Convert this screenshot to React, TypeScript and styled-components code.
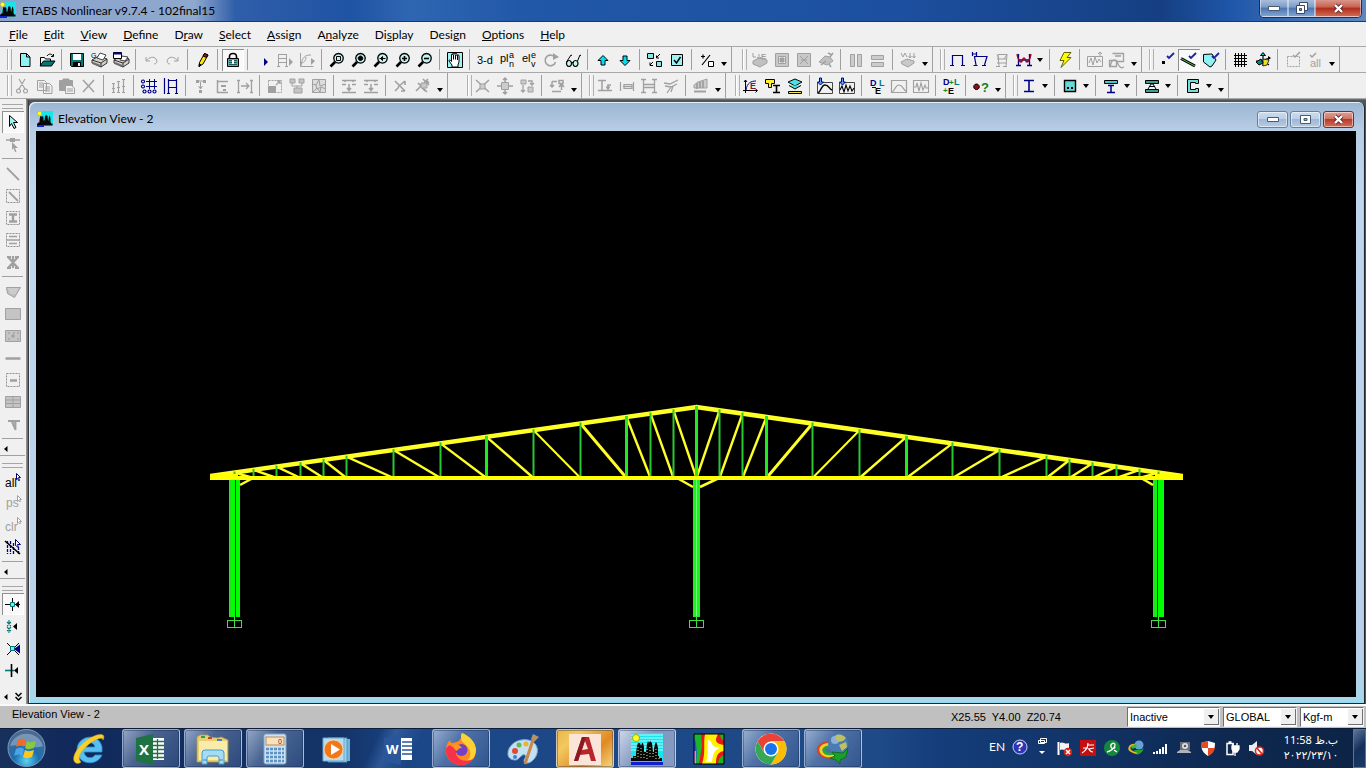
import React from "react";
import styled, { createGlobalStyle, css } from "styled-components";

const UI = `Lato, "Noto Sans", sans-serif`;
const GREY = "#a0a0a0";
const NAVY = "#000084";
const CYAN = "#7fe8e8";
const TEAL = "#007878";
const INK = "#000000";

const GlobalStyle = createGlobalStyle`
  * { box-sizing: border-box; }
  body { margin: 0; background: #f0f0f0; font-family: ${UI}; font-size: 12px; color: #000; }
  button { font: inherit; color: inherit; padding: 0; border: 0; background: none; }
  svg { display: block; }
`;

/* ---------- layout ---------- */

const Shell = styled.div`
  display: flex;
  flex-direction: column;
  height: 100vh;
  overflow: hidden;
`;

const TitleBar = styled.header`
  display: flex;
  align-items: flex-start;
  flex: none;
  height: 22px;
  border-bottom: 1px solid #17396f;
  background:
    linear-gradient(to right, rgba(160, 180, 212, 0.75), rgba(165, 185, 215, 0.8) 195px, rgba(120, 150, 195, 0) 235px),
    linear-gradient(to right, #4d76b4 0, #2c5ca8 260px, #1f53a4 350px, #2f66b2 410px, #2258a8 520px, #1c4f9f 900px, #153f82 1160px, #1f56a8 1230px, #5b88c4 100%);
`;

const TitleText = styled.h1`
  flex: 1;
  margin: 0;
  padding: 0 6px;
  font-size: 12px;
  font-weight: 400;
  line-height: 21px;
`;

const TitleLogo = styled.div`
  padding-top: 2px;
`;

const Caption = styled.div`
  display: flex;
  margin-right: 4px;
  border: 1px solid #1c2f50;
  border-top: 0;
  border-radius: 0 0 5px 5px;
  overflow: hidden;
`;

const CaptionButton = styled.button<{ $w: number; $close?: boolean }>`
  display: flex;
  align-items: center;
  justify-content: center;
  width: ${(p) => p.$w}px;
  height: 17px;
  border: 1px solid rgba(255, 255, 255, 0.45);
  border-top: 0;
  background: ${(p) =>
    p.$close
      ? "linear-gradient(#d9968c, #c8604f 45%, #b02a1a 50%, #cf6a50)"
      : "linear-gradient(#a9bedb, #7d9cc8 45%, #4c74ae 50%, #7ea4d2)"};
`;

const MenuBar = styled.nav`
  display: flex;
  align-items: center;
  flex: none;
  gap: 16px;
  height: 25px;
  padding: 2px 0 0 9px;
  background: #f0f0f0;
  border-bottom: 1px solid #a8a8a8;
`;

const MenuButton = styled.button`
  line-height: 18px;
  & > u { text-underline-offset: 1px; }
`;

const ToolRow = styled.div`
  display: flex;
  flex: none;
  height: 26px;
  background: #f0f0f0;
  border-bottom: 1px solid #a8a8a8;
`;

const Band = styled.div<{ $gap?: number }>`
  display: flex;
  align-items: center;
  flex: none;
  margin-right: ${(p) => p.$gap ?? 0}px;
  border-right: 1px solid #a0a0a0;
`;

const Grip = styled.i<{ $lead: number }>`
  flex: none;
  width: 5px;
  height: 21px;
  margin: 0 ${(p) => p.$lead - 12}px 0 7px;
  border: solid #b0b0b0;
  border-width: 0 1px;
  background: linear-gradient(to right, #fff 1px, #f0f0f0 1px);
`;

const ToolButton = styled.button<{ $on?: boolean }>`
  display: flex;
  align-items: center;
  justify-content: center;
  flex: none;
  width: 22px;
  height: 22px;
  ${(p) =>
    p.$on &&
    css`
      background: #f9f9f9;
      box-shadow: inset 1px 1px #8f8f8f, inset -1px -1px #fff;
    `}
`;

const Rule = styled.i<{ $across?: boolean }>`
  flex: none;
  ${(p) =>
    p.$across
      ? css`width: 21px; height: 1px; margin: 3px 0 4px;`
      : css`width: 1px; height: 21px; margin: 0 4px 0 3px;`}
  background: #a0a0a0;
`;

const DropButton = styled.button<{ $more?: boolean }>`
  display: flex;
  align-items: ${(p) => (p.$more ? "flex-end" : "center")};
  justify-content: center;
  flex: none;
  width: ${(p) => (p.$more ? 13 : 11)}px;
  height: 20px;
  padding-bottom: ${(p) => (p.$more ? 4 : 0)}px;
`;

const Work = styled.div`
  display: flex;
  flex: 1;
  min-height: 0;
  border-bottom: 2px solid #fafafa;
`;

const SideBar = styled.aside`
  display: flex;
  flex-direction: column;
  flex: none;
  width: 26px;
  padding-top: 1px;
  background: #f0f0f0;
`;

const SideBand = styled.div<{ $first?: boolean }>`
  display: flex;
  flex-direction: column;
  align-items: center;
  padding: ${(p) => (p.$first ? 4 : 7)}px 1px 0 0;
`;

const SideGrip = styled.i`
  width: 21px;
  height: 5px;
  margin-bottom: 2px;
  border: solid #a6a6a6;
  border-width: 1px 0;
`;

const SideMore = styled.button<{ $last?: boolean }>`
  display: flex;
  align-items: center;
  gap: 7px;
  width: 100%;
  height: 13px;
  margin-top: ${(p) => (p.$last ? 9 : 0)}px;
  padding-left: 4px;
  border-bottom: ${(p) => (p.$last ? 0 : 1)}px solid #a0a0a0;
`;

const Mdi = styled.main`
  display: flex;
  flex: 1;
  min-width: 0;
  padding: 2px 1px 0 3px;
  background: linear-gradient(to right, #8f8f8f 1px, #4e4e4e 2px, #202428 3px, #50565c 3px);
  border-top: 1px solid #6e6e6e;
`;

const ChildWindow = styled.section`
  display: flex;
  flex-direction: column;
  flex: 1;
  min-width: 0;
  padding: 0 8px 6px 7px;
  border: solid #20262c;
  border-width: 0 1px 1px 0;
  border-radius: 6px 6px 0 0;
  background: linear-gradient(#9bb5d1, #b8cde6 28px, #c0d6ef 90px, #b9d0ea 92%, #a5d8ea);
  box-shadow: inset 1px 1px #e4eef8, inset -1px -1px #8fdcf0;
`;

const ChildTitle = styled.header`
  display: flex;
  align-items: center;
  flex: none;
  height: 29px;
  padding: 5px 2px 0 1px;
`;

const ChildName = styled.h2`
  flex: 1;
  margin: 0;
  padding-left: 5px;
  font-size: 12px;
  font-weight: 400;
  line-height: 20px;
`;

const ChildButtons = styled.div`
  display: flex;
  gap: 2px;
`;

const ChildButton = styled.button<{ $close?: boolean }>`
  display: flex;
  align-items: center;
  justify-content: center;
  width: 31px;
  height: 17px;
  border: 1px solid ${(p) => (p.$close ? "#7c2a22" : "#66809f")};
  border-radius: 3px;
  box-shadow: inset 0 0 0 1px rgba(255, 255, 255, 0.5);
  background: ${(p) =>
    p.$close
      ? "linear-gradient(#e0a097, #d27464 45%, #bc3a28 50%, #d0715b)"
      : "linear-gradient(#cddcee, #bccfe6 45%, #9fb8d5 50%, #b6cce6)"};
`;

const Canvas = styled.div`
  flex: 1;
  min-height: 0;
  background: #000;
  & > svg { width: 100%; height: 100%; }
`;

const StatusBar = styled.footer`
  display: flex;
  align-items: center;
  flex: none;
  height: 22px;
  padding: 0 2px 0 12px;
  background: #c0c0c0;
  font-family: "Liberation Sans", Arial, sans-serif;
  font-size: 11px;
`;

const StatusText = styled.span<{ $grow?: boolean }>`
  flex: ${(p) => (p.$grow ? "1" : "none")};
  width: ${(p) => (p.$grow ? "auto" : "176px")};
  padding-bottom: ${(p) => (p.$grow ? 6 : 0)}px;
  line-height: 16px;
`;

const PickBox = styled.label<{ $w: number }>`
  position: relative;
  width: ${(p) => p.$w}px;
  margin-right: 3px;
  border: 1px solid #707070;
  border-color: #707070 #f4f4f4 #f4f4f4 #707070;
  background: #fff;
  &:last-child { margin-right: 0; }
`;

const Pick = styled.select`
  appearance: none;
  display: block;
  width: 100%;
  height: 18px;
  padding: 0 16px 0 2px;
  border: 0;
  background: #fff;
  color: #000;
  font: 11px "Liberation Sans", Arial, sans-serif;
`;

const PickArrow = styled.i`
  position: absolute;
  top: 1px;
  right: 0;
  bottom: 1px;
  display: flex;
  align-items: center;
  justify-content: center;
  width: 15px;
  background: #f0f0f0;
  border: solid #707070;
  border-width: 0 1px 1px 0;
  pointer-events: none;
`;

const TaskBar = styled.div`
  display: flex;
  align-items: stretch;
  flex: none;
  height: 40px;
  border-top: 1px solid #0b1d3a;
  background:
    linear-gradient(115deg, transparent 345px, rgba(70, 120, 190, 0.45) 360px, transparent 385px),
    linear-gradient(to right, #17305c 0, #10295a 70px, #143468 340px, #1b4788 420px, #1e4a87 880px, #143d7a 940px, #12356a 1060px, #0e2850 1230px, #0c2344 100%);
  color: #fff;
`;

const Start = styled.button`
  flex: none;
  width: 60px;
  padding: 0 0 0 7px;
`;

const Apps = styled.div`
  display: flex;
  gap: 4px;
`;

const AppButton = styled.button<{ $open?: boolean; $tone?: string }>`
  display: flex;
  align-items: center;
  justify-content: center;
  width: 58px;
  height: 39px;
  border-radius: 3px;
  border: 1px solid ${(p) => (p.$open ? "rgba(200,215,240,0.65)" : "transparent")};
  ${(p) =>
    p.$open &&
    css`
      background: ${p.$tone ??
      "linear-gradient(125deg, rgba(205,218,240,0.7), rgba(130,155,195,0.5) 40%, rgba(70,100,150,0.5))"};
      box-shadow: inset 0 0 0 1px rgba(20, 35, 70, 0.35);
    `}
`;

const Tray = styled.div`
  display: flex;
  align-items: center;
  margin-left: auto;
  padding-bottom: 2px;
`;

const Lang = styled.button`
  width: 24px;
  padding-bottom: 2px;
`;

const TrayButton = styled.button<{ $w?: number }>`
  display: flex;
  align-items: center;
  justify-content: center;
  width: ${(p) => p.$w ?? 24}px;
  height: 34px;
`;

const Clock = styled.time`
  display: flex;
  flex-direction: column;
  align-items: center;
  width: 84px;
  font-size: 11px;
  line-height: 16px;
  font-family: "Noto Sans", "DejaVu Sans", sans-serif;
`;

const ClockDate = styled.span`
  direction: ltr;
  unicode-bidi: bidi-override;
  font-family: "DejaVu Sans", sans-serif;
`;

const Desktop = styled.button`
  width: 13px;
  border: 1px solid #5b7396;
  background: linear-gradient(135deg, #5d7597, #14305a 50%, #1c3a66);
`;

/* ---------- small toolbar drawings ---------- */

// [path, stroke, fill, stroke width, dash]
type Stroke = [string, string?, string?, number?, string?];
type Label = { t: string; x: number; y: number; c: string; s?: number; b?: boolean };
type Part = Stroke | Label;

const lens = (inner: Part[]): Part[] => [
  ["M6 10L1.500 14.500", INK, undefined, 2.600],
  ["M9.500 1.500a4.800 4.800 0 1 0 .01 0z", INK, "#bff4f4", 1.300],
  ...inner,
];
const arrowTip = (d: string): Part[] => [[d, NAVY, "#4fa8f4", 1]];
const dashed: Part = ["M1.500 1.500h13v13h-13z", "#909090", undefined, 1, "2 1"];

const DRAWINGS: Record<string, Part[]> = {
  new: [["M3.500 1.500h6l3.500 3.500v9.500h-9.500z", INK, "#8ff2f2"], ["M9.500 1.500v3.500h3.500", INK]],
  open: [["M1.500 13.500v-8h4l1 1.500h5v2", INK, "#e8ffff"], ["M1 14l3.500-5h11.500l-3.500 5z", INK, TEAL], ["M8 4c2-3 5-2 6 0m.5-2v2.500h-2.500", INK]],
  save: [["M1.500 1.500h13v13h-12l-1-1z", INK, TEAL], ["M4 2h8v6H4z", undefined, "#fff"], ["M4 10h8v4.500H4z", undefined, INK], ["M9 11h2v3H9z", undefined, "#eee"]],
  printG: [["M1 8l7-4 8 3v4l-6 4-9-4z", "#333", "#d4d0c8"], ["M6 6l3-5 6 2-3 5z", "#444", "#fff"], ["M1 8l9 3 6-4M10 11v4", "#333"], ["M2 11l7 3", "#707070", undefined, 2], { t: "G", x: 0, y: 6, c: INK, s: 7 }],
  printW: [["M1 8l7-4 8 3v4l-6 4-9-4z", "#333", "#d4d0c8"], ["M9 4l6 1-3 4-5-1z", "#444", "#fff"], ["M1 8l9 3 6-4M10 11v4", "#333"], ["M2 11l7 3", "#707070", undefined, 2], ["M.5.500h8v6h-8z", INK, "#fff"], ["M0 1.500h9", NAVY, undefined, 2]],
  undo: [["M3 5v4h4M3 9c3-4 8-5 10-2s0 5-2 5", GREY]],
  redo: [["M13 5v4h-4M13 9c-3-4-8-5-10-2s0 5 2 5", GREY]],
  pencil: [["M4.500 10.500l5-9 3.500 1.500-5 9-4 2.500z", INK, "#ffe800"], ["M9.500 1.500l3.500 1.500-1.500 2.500-3.500-1.500z", INK, "#a01010"], ["M4.500 11.500l-.5 3 2-1.500z", INK, INK]],
  lock: [["M4.500 7V4.500q0-3 3.500-3t3.500 3V7", INK, undefined, 1.600], ["M2.500 6.500h11v8h-11z", INK, "#5cb0b0"], ["M4 8.500h8M4 10.500h8M4 12.500h8", "#1d5c5c"], ["M7 8h2v4H7z", undefined, "#fff"]],
  run: [["M9 6l4 4-4 4z", undefined, NAVY]],
  runFrame: [["M1.500 2v13M9.500 2v13M1.500 2.500h8M1.500 6.500h8M1.500 10.500h8M0 14.500h3M8 14.500h3", GREY], ["M12 6l4 4-4 4z", undefined, GREY]],
  runCurve: [["M1.500 1v13.500h13M2 14c1-9 4-11 10-11M2 11c4 0 5-4 5-6", GREY], ["M12 6l4 3-4 4z", undefined, GREY]],
  zoomWin: lens([["M7.500 4.500h4v4h-4z", INK]]),
  zoomFull: lens([["M9.500 4a2.300 2.300 0 1 0 .01 0z", INK, INK]]),
  zoomPrev: lens([["M6.500 6.500h6M9.500 4.500l-2 2 2 2z", INK, INK]]),
  zoomIn: lens([["M7 6.500h5M9.500 4v5", INK, undefined, 1.600]]),
  zoomOut: lens([["M7 6.500h5", INK, undefined, 1.600]]),
  pan: [["M.5.500h15v15h-15z", INK, "#9ff2f2"], ["M5 15v-2L2 9c0-1.500 1-1.500 2.500.500V3c0-1.500 1.500-1.500 1.500 0V2c0-1.500 2-1.500 2 0v.5c0-1.500 2-1.500 2 0V4c0-1.500 2-1.500 2 0v6l-1 3v2z", INK, "#fff"], ["M6.500 3v4.500M8.500 3v4.500M10.500 4v4", INK]],
  threeD: [{ t: "3-d", x: 0, y: 12, c: INK, s: 11 }],
  plan: [{ t: "pl", x: 1, y: 10, c: INK, s: 11 }, { t: "a", x: 10, y: 6, c: INK, s: 9 }, { t: "n", x: 10, y: 15, c: INK, s: 9 }],
  elev: [{ t: "el", x: 1, y: 10, c: INK, s: 11 }, { t: "e", x: 10, y: 6, c: INK, s: 9 }, { t: "v", x: 10, y: 15, c: INK, s: 9 }],
  rotate: [["M11 4.500A5.300 5.300 0 1 0 12.500 10", GREY, undefined, 1.600], ["M10 1l6 4-6 3z", undefined, GREY]],
  glasses: [["M4 8.500a2.500 3 0 1 0 .01 0zM10.500 8.500a2.500 3 0 1 0 .01 0z", INK, "#c8f6f6", 1.200], ["M1.500 10L6 3l1 .5M12.500 9L15 3l1 .5M6.500 10.500h2", INK]],
  up: [["M8 3.500l5 5H10v4.500H6V8.500H3z", INK, "#00e0f0"]],
  down: [["M8 13.500l5-5H10V4H6v4.500H3z", INK, "#00e0f0"]],
  shrink: [["M.5 1.500h6v5h-6zM9.500 9.500h5v5h-5z", INK, CYAN], ["M9 6l4-4M9.500 3.500V6H12M6 10l-3 3M3 10.500v3h3", INK]],
  check: [["M2.500 2.500h11v11h-11z", INK, "#9ff2f2"], ["M5 8l2.500 3 4-6", INK, undefined, 1.500]],
  percent: [["M3 13L11 3M2 4.500h4M4 2.500v4", INK, undefined, 1.200], ["M9.500 9.500h5v5h-5z", INK, "#fff"]],
  load1: [["M1 9l6-3 8 2v3l-7 4-7-3z", GREY, "#c0c0c0"], ["M1 1v4h3M7 2v5M5 5l2 2 2-2", GREY], { t: "E", x: 9, y: 7, c: GREY, s: 8, b: true }],
  load2: [["M1.500 1.500h13v13h-13z", GREY, "#c8c8c8"], ["M4.500 4.500h7v7h-7z", GREY, "#f0f0f0"], ["M6 6h4v4H6z", GREY, GREY]],
  load3: [["M1.500 1.500h13v13h-13z", GREY, "#c8c8c8"], ["M4 12L12 4M4 4l8 8M5 8h6", GREY]],
  load4: [["M1 10l6-6 5 1 3 4-6 4z", GREY, "#c0c0c0"], ["M10 1l4 2M12 5l3-4M3 13l5-4M11 12l2 3", GREY, undefined, 1.500]],
  cols: [["M2.500 2.500h4v12h-4zM9.500 2.500h4v12h-4z", GREY, "#ccc"]],
  rows: [["M1.500 3.500h12v4h-12zM1.500 10.500h12v4h-12z", GREY, "#ccc"]],
  loads: [["M1 10l6-3 7 2v2l-6 4-6-3z", GREY, "#c8c8c8"], ["M1 1l2 4 2-4 2 4M10 1v5M14 1v5M8.500 4l1.500 2 1.500-2M12.500 4l1.500 2 1.500-2", GREY]],
  frame: [["M2.500 13V3.500h10V13M0 13.500h4M11 13.500h4", NAVY, undefined, 1.200]],
  frameDef: [["M4 13L2.500 4.500H15L12.500 13M1.500 13.500h4M10 13.500h4M.5 0v4M4.500 0v4M.5 2h4", NAVY, undefined, 1.200]],
  framePlain: [["M5 14L4 2.500h9L12 14M3 7h10M3 2.500l2 4.500M13 2.500L10 7M2 14.500h4M9 14.500h4M3 11h10", GREY]],
  moment: [["M2.500 2v11M13.500 2v11M2.500 8h11M0 13.500h5M11 13.500h5", NAVY, undefined, 1.300], ["M1 2c1 5 2 8 4 8s1-4 3-4 1 4 3 4 3-3 4-8", "#a00028", undefined, 1.400]],
  bolt: [["M7 .5h7l-4 5h4l-10 10 3-7H3z", "#606000", "#ffff00"]],
  hist: [["M.5 4.500h15v10H.5zM2 11l2-5 2 7 2-8 2 6 2-4 2 3M13 4V0M11 2l2-2 2 2", GREY]],
  histRun: [["M3.500 1.500h11v8H8M1 15c2-9 5-9 8-3s5 3 6 3M.5 8.500h7v6h-7zM6 4h6", GREY, undefined, 1.300]],
  optDot: [["M3 9h3v3H3z", undefined, INK], ["M8 4l2 2 5-5", "#2020a0", undefined, 1.800]],
  optLine: [["M0 6.500L14 14", INK, undefined, 3], ["M0 6.500L14 14", "#50c050", undefined, 1], ["M8 4l2 2 5-5", "#2020a0", undefined, 1.800]],
  optArea: [["M.5 2.500L9 2l4 6-4 6-2 1-6.500-5z", INK, "#8ff2f2"], ["M9 4l2 2 5-5", "#2020a0", undefined, 1.800]],
  grid: [["M2.500 1v14M5.500 1v14M8.500 1v14M11.500 1v14M1 3.500h13M1 6.500h13M1 9.500h13M1 12.500h13", INK]],
  axes: [["M8 1v13M8 8l7-2M8 9L1 9M8 9l6 4", INK, undefined, 1.200], ["M5.500 3.500L8 .5l2.500 3z", INK, "#00d0d0"], ["M8 7l6 1-2 5-4 1z", "#333", "#e8e020"], ["M1 10l5-3 2 4-4 2z", INK, "#108080"], ["M13 4l3 2-3 2z", undefined, INK]],
  dashBox: [["M2.500 4.500h12v10h-12z", GREY, undefined, 1, "2 1"], ["M8 3l2 2 5-5", GREY, undefined, 1.500]],
  allCheck: [["M3 3l2 2 4-4", GREY, undefined, 1.500], { t: "all", x: 3, y: 15, c: GREY, s: 11 }],
  cut: [["M4 1l6 10M10 1L4 11M3.500 11a2 2 0 1 0 .01 0zM10.500 11a2 2 0 1 0 .01 0z", GREY, undefined, 1.200]],
  copy: [["M.5 2.500h7l2 2v8h-9zM6.500 5.500h6l2.500 2.500v7.500H6.500z", GREY, "#f0f0f0"], ["M2 5h4M2 7h4M2 9h4M8 9h5M8 11h5M8 13h5", GREY]],
  paste: [["M.5 2.500h13v10H.5zM4 1h6v3H4z", GREY, GREY], ["M6.500 7.500h6l3 2.500v5.500h-9z", GREY, "#f0f0f0"], ["M8 11h6M8 13h6", GREY]],
  del: [["M2 2l11 12M13 2L2 14", GREY, undefined, 1.500]],
  stories: [["M2.500 14V6M7.500 14V4M12.500 14V2M1 5.500h3M6 3.500h3M11 1.500h3M1 10.500h3M6 9.500h3M11 8.500h3M1 14.500h3M6 14.500h3M11 14.500h3", GREY, undefined, 1.200]],
  points: [["M5 3.500h11M5 8.500h11M8.500 1v10M13.500 1v10", NAVY], ["M2 2a1.500 1.500 0 1 0 .01 0zM2 7a1.500 1.500 0 1 0 .01 0zM3.500 12a1.500 1.500 0 1 0 .01 0zM8.500 12a1.500 1.500 0 1 0 .01 0zM13.500 12a1.500 1.500 0 1 0 .01 0z", NAVY, "#fff", 1.200]],
  frameH: [["M1.500 0v16M5.500 1v15M13.500 1v15M5.500 2.500h8M5.500 9.500h8M4 15.500h3M12 15.500h3", NAVY, undefined, 1.200]],
  alignT: [["M3 2h3v3H3zM10 2h3v3h-3zM6 12h3v3H6z", undefined, GREY], ["M7.500 4v7M5.500 8l2 3 2-3M6 3h4", GREY]],
  alignL: [["M2.500 2v12.500H13M3 3.500h10", GREY, undefined, 1.500], ["M6 7h5v2H6zM8 11h3v2H8z", undefined, GREY]],
  spread: [["M1.500 2v12M14.500 2v12M4 8h7M9 5l3 3-3 3M0 2.500h3M13 2.500h3M0 14.500h3M13 14.500h3", GREY, undefined, 1.300]],
  scale: [["M1.500 2.500h13v12h-13z", GREY, undefined, 1, "2 1"], ["M1 8h8v7H1z", undefined, GREY], ["M9 7l4-4M10 3h3v3", GREY, undefined, 1.300]],
  group: [["M1 1h5v4H1zM10 1h5v4h-5zM5 10h8v5H5z", GREY, "#c4c4c4"], ["M3 5v3h10V5M8 8v2", GREY]],
  mesh: [["M1.500 1.500h13v13h-13z", GREY, "#dcdcdc"], ["M1 6l4 1 3-5 1 6 6-2M2 14l4-4 3 4 1-5 5 2M5 7l1 4 4-2", GREY]],
  levels: [["M1 2.500h14M1 6.500h4M11 6.500h4M1 14.500h14M4 2v2M12 2v2M8 6v6M6 10l2 2.500 2-2.500", GREY, undefined, 1.500]],
  snapA: [["M2 3l10 10M5 9l7-6M2 13l4-4M12 3v4M12 13H8", GREY, undefined, 1.600]],
  snapB: [["M1 13l5-5M9 5l4-4M3 5l9 9M8 1l6 6M5 7l5 6M11 2l3 3", GREY, undefined, 1.600], ["M6 5h6v5H6z", GREY, "#c8c8c8"]],
  joinX: [["M1 2l13 12M14 2L1 14", GREY, undefined, 1.500], ["M5 6h5v5H5z", GREY, "#ccc"]],
  target: [["M4.500 4.500h7v7h-7z", GREY, "#ccc"], ["M8 0v4M8 12v4M0 8h4M12 8h4M6 2l2-2 2 2M6 14l2 2 2-2", GREY, undefined, 1.500]],
  tower: [["M2 2h5v4H2zM9 9h5v5H9z", GREY, "#ccc"], ["M4 7v7M2 12l2 2 2-2M9 3h4v4M11 5l2 2 2-2", GREY, undefined, 1.300]],
  swap: [["M3 3.500h5M3 3.500v5M1 7l2 2 2-2M12.500 12V7M10 9l2.500-3L15 9M3 13.500h9M10 2.500h4v3h-4z", GREY, undefined, 1.500]],
  ibeam: [["M1 2.500h8M5 3v9M1 12.500h14M11 11V7h3M9.500 8.500L11 11l1.500-2.500", GREY, undefined, 1.500]],
  bar: [["M1.500 4v9M4 8.500h9M5 6.500h8v4H5zM14.500 4v9", GREY, "#ddd", 1.200]],
  hbeam: [["M2.500 1v14M13.500 1v14M3 6.500h10M3 9.500h10M0 1.500h5M11 1.500h5M0 14.500h5M11 14.500h5", GREY, "#ccc", 1.300]],
  branch: [["M1 5l6 1 8-4M2 8l6 1 6-3M8 9l-4 6M10 8l-2 6", GREY, undefined, 1.300]],
  fill: [["M1 7l4-3 9-3v9H1z", GREY, "#ccc"], ["M1 13.500h12M4 5v6M7 4v6M10 3v7", GREY, undefined, 1.800]],
  plotE: [["M2.500 2v13M0 12.500h14M1 4l1.500-2L4 4M12.500 11l2 1.500-2 2", INK], ["M3 12c1-7 5-9 10-9", NAVY], { t: "E", x: 7, y: 11, c: "#901030", s: 9, b: true }],
  tI: [["M.5 1.500h9v4h-3v4h-3v-4h-3z", INK, "#ffef30"], ["M8 7.500h7M11.500 8v6M8 14.500h7", INK, undefined, 1.600]],
  layer: [["M1 4l7-3 7 3-7 4z", INK, "#50e0e0"], ["M2 7.500l6 3.500 6-3.500", INK, "#50e0e0"], ["M1.500 13.500h13v2h-13z", INK, "#ffe94a"]],
  spec: [["M.5 4.500h15v11H.5z", "#444"], ["M1 15c3-1 3-8 7-8s4 4 7 5", INK, undefined, 1.500], ...arrowTip("M2.500 0v4h-2l3 3 3-3h-2V0z")],
  time: [["M.5 4.500h15v11H.5z", "#444"], ["M1 12l2-4 2 6 2-7 2 6 2-5 2 5 2-3", INK, undefined, 1.100], ...arrowTip("M2.500 0v4h-2l3 3 3-3h-2V0z")],
  del3: [{ t: "D", x: 1, y: 8, c: NAVY, s: 9, b: true }, { t: "L", x: 10, y: 8, c: TEAL, s: 9, b: true }, { t: "E", x: 6, y: 16, c: INK, s: 9, b: true }, ["M3 9.500h4", NAVY]],
  specG: [["M.5 2.500h15v12H.5zM1 14c3-1 3-7 7-7s4 5 7 6", GREY, undefined, 1.200]],
  timeG: [["M.5 2.500h15v12H.5zM1 9h2l1-4 2 8 2-8 2 7 2-5 1 3h2", GREY, undefined, 1.100]],
  combo: [{ t: "D", x: 0, y: 7, c: NAVY, s: 9, b: true }, { t: "+", x: 6, y: 7, c: "#109010", s: 8, b: true }, { t: "L", x: 11, y: 7, c: TEAL, s: 9, b: true }, { t: "+", x: 0, y: 15, c: "#109010", s: 8, b: true }, { t: "E", x: 5, y: 16, c: INK, s: 9, b: true }],
  info: [["M3.500 6a2.800 2.800 0 1 0 .01 0z", INK, "#901010"], { t: "?", x: 8, y: 14, c: "#108020", s: 13, b: true }],
  steelI: [["M3 2.500h10M3 13.500h10M8 3v10", NAVY, undefined, 1.600]],
  concrete: [["M2.500 2.500h11v11h-11z", INK, "#66dada", 1.400], ["M5 9h2v2H5zM9 9h2v2H9z", undefined, INK]],
  composite: [["M1.500 2.500h13v3h-13z", INK, "#40cccc"], ["M5 7.500h6M8 8v6M4 14.500h8", NAVY, undefined, 1.500]],
  joist: [["M1.500 2.500h13v3h-13zM1.500 11.500h13v3h-13z", INK, "#30a0a0"], ["M4 11l3-5h2l3 5M6 8.500h4", INK]],
  wall: [["M2.500 1.500h11v4h-3v-1h-5v7h5v-1h3v4h-11z", INK, "#70dede"]],
  pointer: [["M4.500 1.500l8 7h-4l2.500 5-2 1-2.500-5-2 3z", INK, "#9ff2f2"]],
  reshape: [["M1 4h14", GREY, undefined, 1.500], ["M5 2h5v4H5zM7 6l6 6h-3l1.500 3.500-1.500.500-1.500-4-1.500 2z", undefined, GREY]],
  line: [["M2 2l12 12", GREY, undefined, 1.800]],
  lineBox: [dashed, ["M4 4l9 9", GREY, undefined, 1.800]],
  colBox: [dashed, ["M4 4.500h8M4 11.500h8M8 5v6", GREY, undefined, 2.500]],
  beamBox: [dashed, ["M4 4.500h8M4 8h8M4 11.500h8M1 8h3M12 8h3", GREY, undefined, 1.500]],
  brace: [["M3 3l10 11M13 3L3 14M8 2v12M2 3h4M10 3h4M2 14h4M10 14h4", GREY, undefined, 2.200]],
  poly: [["M1.500 3.500h14l-6 10-7-4z", GREY, "#c0c0c0"], ["M3 5h10M4 7h8M5 9h6", "#d8d8d8"]],
  rect: [["M.5 2.500h15v11H.5z", GREY, "#c4c4c4"]],
  rectDot: [["M.5 2.500h15v11H.5z", GREY, "#c4c4c4"], ["M3 5h2M8 5h2M12 5h2M6 8h4M3 11h2M12 11h2M8 6v4", "#989898"]],
  hline: [["M.5 8.500h15", GREY, undefined, 2.500]],
  hlineBox: [dashed, ["M5 8.500h7", GREY, undefined, 2.500]],
  rectLines: [["M.5 2.500h15v11H.5zM1 6h14M1 9.500h14M8 3v10", GREY, "#c4c4c4"]],
  door: [["M3 5h12M6.500 5l4 9V5", GREY, "#b8b8b8", 1.800]],
  all: [{ t: "all", x: 0, y: 14, c: INK, s: 12 }, ["M11.500.500l4 4h-2l1 3-1 0-1-2-1 1z", NAVY, "#fff"]],
  ps: [{ t: "ps", x: 1, y: 12, c: GREY, s: 12 }, ["M12.500.500l4 4h-2l1 2-1 0-1-1-1 1z", GREY, "#fff"]],
  clr: [{ t: "clr", x: 0, y: 14, c: GREY, s: 12 }, ["M12.500.500l4 4h-2l1 2-1 0-1-1-1 1z", GREY, "#fff"]],
  intersect: [["M2.500 2v13M5.500 2v13M8.500 4v11M13.500 8v7", NAVY, undefined, 1.300, "3 1"], ["M0 2l15 13", INK, undefined, 1.600], ["M10.500.500l5 5h-3l1 3-3-2z", NAVY, "#fff"]],
  snap1: [["M0 8.500h15M7.500 2v13", INK], ["M5.500 6.500h4v4h-4z", TEAL, CYAN], ["M10 8.500l4-3.500v7z", undefined, INK]],
  snap2: [["M4 2v3M4 12v3M2 4l4 4M6 4L2 8M2 9l4 4M6 9l-4 4", TEAL, undefined, 1.100], ["M8 8.500l4-3.500v7z", undefined, INK]],
  snap3: [["M2 3l12 12M14 3L2 15", INK], ["M5.500 6.500h4v4h-4z", TEAL, CYAN], ["M9 9l6-4.500v9z", undefined, NAVY]],
  snap4: [["M0 8.500h9", TEAL, undefined, 1.600], ["M6.500 2v13", INK, undefined, 1.600], ["M9 8.500l4-3.500v7z", undefined, INK]],
};

function Drawing({ name }: { name: string }) {
  return (
    <svg width="16" height="16" viewBox="0 0 16 16" overflow="visible" aria-hidden="true">
      {DRAWINGS[name].map((p, i) =>
        Array.isArray(p) ? (
          <path key={i} d={p[0]} stroke={p[1] ?? "none"} fill={p[2] ?? "none"} strokeWidth={p[3] ?? 1} strokeDasharray={p[4]} />
        ) : (
          <text key={i} x={p.x} y={p.y} fill={p.c} fontSize={p.s ?? 10} fontWeight={p.b ? 700 : 400} fontFamily="Liberation Sans, sans-serif">
            {p.t}
          </text>
        )
      )}
    </svg>
  );
}

function Caret() {
  return (
    <svg width="7" height="4" viewBox="0 0 7 4" aria-hidden="true">
      <path d="M0 0h6L3 4z" fill="#000" />
    </svg>
  );
}

/* "|" is a separator, "v" a drop-down arrow, a leading "*" marks a pressed button */
const ROWS: { lead: number; bands: { gap?: number; items: string }[] }[] = [
  {
    lead: 14,
    bands: [
      { gap: 3, items: "new open | save printG printW | undo redo | pencil | *lock | run runFrame runCurve | zoomWin zoomFull zoomPrev zoomIn zoomOut | pan | threeD plan elev rotate glasses | up down | shrink check | percent" },
      { items: "load1 load2 load3 load4 | cols rows | loads" },
      { items: "frame frameDef framePlain moment v | bolt | hist histRun" },
      { items: "optDot *optLine optArea | grid axes | dashBox allCheck" },
    ],
  },
  {
    lead: 12,
    bands: [
      { gap: 12, items: "cut copy paste del | stories | points frameH | alignT alignL spread | scale group mesh | levels levels | snapA snapB" },
      { items: "joinX target tower | swap" },
      { gap: 2, items: "ibeam bar hbeam branch | fill" },
      { items: "plotE tI layer | spec time | del3 specG timeG | combo | info" },
      { items: "steelI v | concrete v | composite v | joist v | wall v" },
    ],
  },
];

const SIDE = [
  "*pointer reshape | line lineBox colBox beamBox brace | poly rect rectDot hline hlineBox rectLines door |",
  "all ps clr intersect |",
  "*snap1 snap2 snap3 snap4",
];

function Tools({ items, across }: { items: string; across?: boolean }) {
  return (
    <>
      {items.split(" ").map((item, i) => {
        if (item === "|") return <Rule key={i} $across={across} />;
        if (item === "v") return <DropButton key={i} aria-label="Choose"><Caret /></DropButton>;
        const on = item.startsWith("*");
        const name = on ? item.slice(1) : item;
        return (
          <ToolButton key={i} $on={on} aria-label={name} aria-pressed={on}>
            <Drawing name={name} />
          </ToolButton>
        );
      })}
    </>
  );
}

/* ---------- logos ---------- */

function Skyline({ size }: { size: number }) {
  const small = size < 20;
  return (
    <svg width={size} height={size} viewBox="0 0 32 32" aria-hidden="true">
      <path d={small ? "M10 0h22v29H4V14h6z" : "M0 0h32v29H0z"} fill="#18e4ec" />
      {!small && <path d="M0 2h32M0 5h32M0 8h32M0 11h32M0 14h32M0 17h32" stroke="#b8fafa" strokeWidth="1" />}
      <circle cx="5" cy="5" r={small ? 4.5 : 3.5} fill="#ffff20" stroke="#a8a800" />
      <path d="M0 29v-4h2v-2h3v-3l1-7 1-3h2l1 3 1-3h1l1 4v5h2l1-8 1-3 1 2 1-2 2 2 1 9h1v-3l1-5 1-2 1 2 1 4v8h1v2h3v4z" fill="#080808" />
      {!small && (
        <path d="M4 24v3M7 14v12M10 15v11M13 21v5M16 16v10M19 14v12M22 20v6M25 16v10M28 25v2" stroke="#e0dc98" strokeWidth="1" strokeDasharray="1 2" />
      )}
      <path d={small ? "M0 28h14v4H0z" : "M0 28h32v4H0z"} fill="#1020d0" />
      {!small && <path d="M0 28.500h32" stroke="#30c8e0" />}
    </svg>
  );
}

const Big = ({ children }: { children: React.ReactNode }) => (
  <svg width="32" height="32" viewBox="0 0 32 32" overflow="visible" aria-hidden="true">{children}</svg>
);

const APPS: { name: string; open?: boolean; tone?: string; art: React.ReactNode }[] = [
  {
    name: "Internet Explorer",
    art: (
      <Big>
        <path d="M29 19H11c1 7 9 7 11 3h7C24 34 4 32 4 17S26-1 29 14zM11 14h11c-1-6-10-6-11 0z" fill="#58c0f0" stroke="#2a90d4" strokeWidth=".8" />
        <path d="M3 30C-4 26 6 11 17 5s16-4 13 2c0-3-5-2-11 2S2 23 8 29c-1 1-3 2-5 1z" fill="#f8cf2c" stroke="#e0a818" strokeWidth=".5" />
      </Big>
    ),
  },
  {
    name: "Excel",
    open: true,
    art: (
      <Big>
        <path d="M17 5h12v22H17z" fill="#fff" />
        <path d="M18 8.500h11M18 12.500h11M18 16.500h11M18 20.500h11M18 24.500h11M22.500 6v20" stroke="#1f7244" strokeWidth="1.300" />
        <path d="M1 5l17-4v31L1 28z" fill="#1f7244" />
        <text x="4" y="22" fontSize="15" fontWeight="700" fontFamily="Open Sans, sans-serif" fill="#fff">X</text>
      </Big>
    ),
  },
  {
    name: "Explorer",
    open: true,
    art: (
      <Big>
        <path d="M0 4l3-2h8l2 2 8 1 3-1 7 3v22H0z" fill="#e8cf72" stroke="#b99a3c" strokeWidth=".8" />
        <path d="M2 8h28v19H2z" fill="#f8eca8" />
        <path d="M4 3h4v2H4z" fill="#30a050" /><path d="M11 4h4v2h-4z" fill="#d04030" /><path d="M20 6h5v2h-5z" fill="#4080d0" />
        <path d="M5 31V20q0-3 3-3h16q3 0 3 3v11h-5v-6q0-2-2-2h-8q-2 0-2 2v6z" fill="#a4dcf4" stroke="#4a9cc8" />
        <path d="M6 27h4M22 27h4" stroke="#3a88b8" />
      </Big>
    ),
  },
  {
    name: "Calculator",
    open: true,
    art: (
      <Big>
        <rect x="5" y="1" width="22" height="30" rx="2" fill="#cfe2f2" stroke="#7fa8c8" />
        <rect x="7" y="4" width="18" height="8" fill="#fbe0bc" stroke="#b88a58" />
        <text x="19" y="11" fontSize="7" fontFamily="Liberation Sans, sans-serif" fill="#333">0</text>
        <path d="M7 16h18M7 20h18M7 24h18M7 28h18" stroke="#5c92c4" strokeWidth="2.500" strokeDasharray="3 1" />
      </Big>
    ),
  },
  {
    name: "Media Player",
    art: (
      <Big>
        <path d="M10 6h19v22H10z" fill="#6fb4d8" /><path d="M7 5h19v24H7z" fill="#9fd0ea" stroke="#4f94bc" />
        <path d="M2 5h21v23H2z" fill="#b4dcf2" stroke="#68a8cc" />
        <circle cx="12.500" cy="16.500" r="9.500" fill="#f0781c" stroke="#fbd0a0" />
        <path d="M10 11l9 5.500-9 5.500z" fill="#fff" />
      </Big>
    ),
  },
  {
    name: "Word",
    art: (
      <Big>
        <path d="M17 5h12v22H17z" fill="#fff" />
        <path d="M19 9h10M19 13h10M19 17h10M19 21h10" stroke="#2a5699" strokeWidth="1.600" />
        <path d="M1 5l17-4v31L1 28z" fill="#2a5699" />
        <text x="3" y="21" fontSize="13" fontWeight="700" fontFamily="Open Sans, sans-serif" fill="#fff">W</text>
      </Big>
    ),
  },
  {
    name: "Firefox",
    open: true,
    art: (
      <Big>
        <path d="M17 0c3 1 5 4 6 6 5 2 8 7 8 12 0 8-7 14-15 14S1 26 1 18c0-5 1-8 4-11 0 2 1 3 3 3 3-1 6-1 8-5 0-2 0-4 1-5z" fill="#ff8a1e" />
        <path d="M17 0c8 3 14 10 14 17-1 9-6 12-12 13 6-4 8-9 5-14-2-5-8-6-8-11 0-2 0-4 1-5z" fill="#ffd234" />
        <path d="M1 17c0 9 7 15 15 15 5 0 9-2 12-6-6 3-14 2-16-3-2-2-1-5 1-7-3-2-6-1-8-4-3 2-4 3-4 5z" fill="#f8304c" />
        <circle cx="16.500" cy="17" r="6" fill="#7340c8" />
        <path d="M9 12c4-1 6 0 8 3-3 0-4 1-5 3-2-1-4-3-3-6z" fill="#ff9a20" />
      </Big>
    ),
  },
  {
    name: "Paint",
    art: (
      <Big>
        <path d="M1 22C0 12 11 5 21 7s12 12 6 19c-4 5-9 5-10 2 0-3 3-4 1-6-3-2-5 4-9 5-4 0-7-1-8-5z" fill="#c4e0f2" stroke="#7fb0d4" />
        <circle cx="8" cy="18" r="3" fill="#e04a38" /><circle cx="12" cy="12" r="2.500" fill="#60b850" /><circle cx="19" cy="11" r="2.500" fill="#f0b030" /><circle cx="8" cy="24" r="2" fill="#4080d0" />
        <path d="M27 4L18 31" stroke="#c88848" strokeWidth="3" /><path d="M24 6l2-5 6 3-5 5z" fill="#b89068" />
      </Big>
    ),
  },
  {
    name: "AutoCAD",
    open: true,
    tone: "linear-gradient(135deg, #e8b648, #f3c860 25%, #e08a24 65%, #f6d880)",
    art: (
      <Big>
        <path d="M0 1h32v31H0z" fill="#fbe4d8" />
        <path d="M5 28L13 4h7l7 24h-5l-2-7-9 1-2 6zM13 17l6-1-3-8z" fill="#b8242c" />
        <path d="M13 4h4L9 28H5z" fill="#8c1820" />
      </Big>
    ),
  },
  {
    name: "ETABS",
    open: true,
    tone: "linear-gradient(125deg, rgba(225,232,245,0.9), rgba(165,180,210,0.75) 45%, rgba(190,200,225,0.65))",
    art: <Skyline size={32} />,
  },
  {
    name: "SAFE",
    art: (
      <Big>
        <path d="M1 1h30v30H1z" fill="#e81818" />
        <path d="M1 1h7l1 12-3 18H1z" fill="#18b828" /><path d="M1 4q4 8 2 27H1z" fill="#2848f0" /><path d="M1 18h2v13H1z" fill="#f080f0" />
        <path d="M12 1h13c-4 7-2 10 6 11v6c-7 1-8 6-8 13H9c4-12 1-20 3-30z" fill="#fff200" />
        <path d="M15 7c4 0 3 6 8 7l4 1c-6 2-7 6-8 14h-6c3-8 1-14 2-22z" fill="#fff" />
        <path d="M27 1h4v7q-4-2-4-7zM31 22v9h-6q0-7 6-9z" fill="#20b020" />
        <path d="M1 1h30v30H1z" fill="none" stroke="#000" />
      </Big>
    ),
  },
  {
    name: "Chrome",
    open: true,
    art: (
      <Big>
        <circle cx="16" cy="16" r="15.500" fill="#fff" />
        <path d="M2.600 8.300A15.500 15.500 0 0 1 29.400 8.300H16L9.300 19.800z" fill="#ea4335" />
        <path d="M29.400 8.300A15.500 15.500 0 0 1 16 31.500l6.700-11.700L16 8.300z" fill="#fbbc04" />
        <path d="M2.600 8.300A15.500 15.500 0 0 0 16 31.500l6.700-11.700H9.300z" fill="#34a853" />
        <circle cx="16" cy="16" r="7.500" fill="#fff" /><circle cx="16" cy="16" r="6" fill="#1a73e8" />
      </Big>
    ),
  },
  {
    name: "Download Manager",
    open: true,
    art: (
      <Big>
        <path d="M15 10C6 8 0 13 1 18s9 8 16 6" fill="none" stroke="#e04020" strokeWidth="2" />
        <path d="M15 12C8 10 3 14 4 18s7 6 13 4" fill="none" stroke="#f4d020" strokeWidth="3" />
        <path d="M15 14c-5-1-9 1-8 4s6 4 11 2" fill="none" stroke="#28a838" strokeWidth="2.500" />
        <circle cx="21" cy="11" r="10" fill="#4a7cb4" />
        <circle cx="18" cy="7" r="4" fill="#a8c8e8" opacity=".7" />
        <path d="M18 3c4-3 8-1 11 2l-3 3-5 1-2-3zM22 12l7-3 1 5-5 4z" fill="#c0c060" />
        <path d="M15 19l11 1 5-5-2 9-6 3v4l-4-4-6-2 5-2z" fill="#18a028" stroke="#0c6414" strokeWidth=".8" />
      </Big>
    ),
  },
];

const Small = ({ children }: { children: React.ReactNode }) => (
  <svg width="16" height="16" viewBox="0 0 16 16" overflow="visible" aria-hidden="true">{children}</svg>
);

const TRAY: { name: string; w?: number; art: React.ReactNode }[] = [
  { name: "Help", w: 22, art: <Small><circle cx="8" cy="7" r="7" fill="#2c36b4" stroke="#c8d0f4" /><text x="4" y="11" fontSize="12" fontWeight="700" fill="#fff" fontFamily="Liberation Sans, sans-serif">?</text></Small> },
  { name: "Language options", w: 21, art: <Small><path d="M6.500-1.500h6v4h-6zM4.500.500h6v3h-6z" fill="#14305c" stroke="#fff" /><path d="M5 11h6l-3 3z" fill="#fff" /></Small> },
  { name: "Action Center", art: <Small><path d="M2.500 2v13" stroke="#fff" strokeWidth="2" /><path d="M4 3c3-2 5 2 9 0v7c-3 2-6-2-9 0z" fill="#f4f4f4" /><circle cx="12" cy="12" r="4.300" fill="#d82018" /><path d="M10 10l4 4M14 10l-4 4" stroke="#fff" strokeWidth="1.500" /></Small> },
  { name: "Acrobat", art: <Small><path d="M0 0h16v16H0z" fill="#c41010" /><path d="M2 13c5-3 6-7 6-10M8 9l6-1M7 5h7M3 8h5M9 9c1 2 2 3 4 3" fill="none" stroke="#fff" strokeWidth="1.200" /></Small> },
  { name: "Sync", art: <Small><circle cx="8" cy="8" r="8" fill="#15873c" /><path d="M3 12c4-1 8-4 8-7 0-3-5-2-4 2 0 2 4 2 4 0M10 10l3 2" fill="none" stroke="#fff" strokeWidth="1.300" /></Small> },
  { name: "Downloads", art: <Small><path d="M8 5C1 4 0 9 3 11s7 2 9 1" fill="none" stroke="#e8b820" strokeWidth="2" /><circle cx="11" cy="5" r="4.500" fill="#6aa0d8" /><path d="M6 10h7l3-2-2 4-5 3v-2z" fill="#18a828" /><path d="M3 6l5-2 1 3-5 2z" fill="#30c040" /></Small> },
  { name: "Network", art: <Small><path d="M2 12v2M5 11v3M8 9v5M11 7v7M14 4v10" stroke="#fff" strokeWidth="2" /></Small> },
  { name: "Camera", art: <Small><path d="M4 2h10v8H4z" fill="#6b6f78" /><circle cx="9" cy="6" r="3" fill="#dfe4ea" /><circle cx="9" cy="6" r="1.300" fill="#556" /><path d="M1 12l3-2h8l3 2v1H1z" fill="#b0b4ba" /></Small> },
  { name: "Security", art: <Small><path d="M1 3l7-2 7 2c0 6-2 10-7 13C3 13 1 9 1 3z" fill="#fff" /><path d="M8 1v7H1c0-2 0-3 0-5zM8 8h7c-1 4-3 6-7 8z" fill="#e84820" /></Small> },
  { name: "Power", w: 23, art: <Small><path d="M3 3.500h6v11H3zM4.500 2h3" fill="none" stroke="#fff" strokeWidth="1.500" /><path d="M8 6h7v3l-2 3h-3L8 9zM9 3v3M13 3v3M11 12v4" fill="#fff" stroke="#fff" strokeWidth="1.300" /></Small> },
  { name: "Volume", w: 26, art: <Small><path d="M1 5h3l5-4v14l-5-4H1z" fill="#e8ecf2" /><circle cx="11.500" cy="11" r="4" fill="#fff" stroke="#d82820" strokeWidth="1.600" /><path d="M9 8l5 6" stroke="#d82820" strokeWidth="1.600" /></Small> },
];

/* ---------- truss ---------- */

const SPAN = [234, 253, 276, 300, 323, 346, 393, 440, 486, 533, 580, 626, 650, 673, 696];
const HEAVY = new Set([486, 626, 696]);
const CENTRE = 696.5;
const chord = (x: number) => 476 - ((x - 210) / (CENTRE - 210)) * 69;
const mirror = (x: number) => 2 * CENTRE - x;

function HalfTruss({ flip }: { flip?: boolean }) {
  const at = (x: number) => (flip ? mirror(x + 0.5) : x + 0.5);
  return (
    <g>
      {SPAN.slice(0, -1).map((x, i) => (
        <line key={x} x1={at(x)} y1={chord(x)} x2={at(SPAN[i + 1])} y2={478} stroke="#ffff28" strokeWidth={x === 580 ? 3 : x === 533 ? 2 : 2.4} />
      ))}
      <path d={`M${at(210)} 476L${CENTRE + (flip ? -0.5 : 0.5)} 407`} stroke="#ffff28" strokeWidth="4.500" />
      {SPAN.map((x) => (
        <line key={x} x1={at(x)} y1={chord(x) - 1} x2={at(x)} y2={477} stroke={HEAVY.has(x) ? "#20ea20" : "#28c832"} strokeWidth={HEAVY.has(x) ? 3 : 2} />
      ))}
    </g>
  );
}

function Support({ x }: { x: number }) {
  return <path d={`M${x} 616V628M${x - 7} 620.500H${x + 7}V627.500H${x - 7}Z`} fill="none" stroke="#40e040" shapeRendering="crispEdges" />;
}

function Elevation() {
  return (
    <svg viewBox="36 131 1320 566" role="img" aria-label="Truss elevation">
      <HalfTruss />
      <HalfTruss flip />
      <path d="M210 478H1183" stroke="#ffff00" strokeWidth="4" />
      <path d="M210 474h28v3h-28zM1155 474h28v3h-28z" fill="#ffff00" />
      <path d="M229 480h11v137h-11zM1153 480h11v137h-11z" fill="#00ff00" />
      <path d="M230.500 480v137M1154.500 480v137" stroke="#20e020" />
      <path d="M235.500 480v137M1157.500 480v137" stroke="#003800" />
      <path d="M693 480h7v137h-7z" fill="#20f020" />
      <path d="M696.500 480v137" stroke="#70ff70" />
      <path d="M240 485l13-7M677 478l16 9M700 487l19-9M1153 485l-12-7" stroke="#ffff28" strokeWidth="2.500" />
      <Support x={234.5} />
      <Support x={696.5} />
      <Support x={1158.5} />
    </svg>
  );
}

const MENUS = ["_File", "_Edit", "_View", "_Define", "D_raw", "_Select", "_Assign", "A_nalyze", "Di_splay", "Desi_gn", "_Options", "_Help"];

function PickField({ label, w, options }: { label: string; w: number; options: string[] }) {
  return (
    <PickBox $w={w}>
      <Pick aria-label={label}>
        {options.map((o) => <option key={o}>{o}</option>)}
      </Pick>
      <PickArrow><Caret /></PickArrow>
    </PickBox>
  );
}

const MinGlyph = () => <svg width="12" height="5"><path d="M.5.500h11v4H.5z" fill="#fff" stroke="#4a5a70" /></svg>;
const CloseGlyph = () => <svg width="13" height="11"><path d="M3 2l7 7M10 2L3 9" stroke="#5a2a28" strokeWidth="4" /><path d="M3 2l7 7M10 2L3 9" stroke="#fff" strokeWidth="2.400" /></svg>;
const MaxGlyph = () => <svg width="11" height="9"><path d="M.5.500h10v8H.5z" fill="#fff" stroke="#4a5a70" /><path d="M4 3.500h3v2H4z" fill="#9ab" stroke="#4a5a70" /></svg>;
const RestoreGlyph = () => <svg width="12" height="12"><path d="M3.500.500h8v8h-8z" fill="#fff" stroke="#3a4a60" /><path d="M.5 3.500h8v8h-8z" fill="#fff" stroke="#3a4a60" /><path d="M3.500 6.500h2v2h-2z" fill="#7c98bc" stroke="#3a4a60" /></svg>;

export default function App() {
  return (
    <Shell>
      <GlobalStyle />
      <TitleBar>
        <TitleLogo><Skyline size={16} /></TitleLogo>
        <TitleText>ETABS Nonlinear v9.7.4 - 102final15</TitleText>
        <Caption>
          <CaptionButton $w={28} aria-label="Minimize"><MinGlyph /></CaptionButton>
          <CaptionButton $w={27} aria-label="Restore"><RestoreGlyph /></CaptionButton>
          <CaptionButton $w={46} $close aria-label="Close"><CloseGlyph /></CaptionButton>
        </Caption>
      </TitleBar>
      <MenuBar>
        {MENUS.map((m) => {
          const [before, rest] = m.split("_");
          return <MenuButton key={m}>{before}<u>{rest[0]}</u>{rest.slice(1)}</MenuButton>;
        })}
      </MenuBar>
      {ROWS.map((row, r) => (
        <ToolRow key={r}>
          {row.bands.map((band, b) => (
            <Band key={b} $gap={band.gap}>
              <Grip $lead={row.lead} />
              <Tools items={band.items} />
              <DropButton $more aria-label="More"><Caret /></DropButton>
            </Band>
          ))}
        </ToolRow>
      ))}
      <Work>
        <SideBar>
          {SIDE.map((items, i) => (
            <SideBand key={i} $first={i === 0}>
              <SideGrip />
              <Tools items={items} across />
              <SideMore $last={i === 2} aria-label="More">
                <svg width="4" height="6" aria-hidden="true"><path d="M3.500 0v6L0 3z" /></svg>
                {i === 2 && <svg width="7" height="9" aria-hidden="true"><path d="M.5 1l3 3 3-3M.5 5l3 3 3-3" fill="none" stroke="#000" strokeWidth="1.500" /></svg>}
              </SideMore>
            </SideBand>
          ))}
        </SideBar>
        <Mdi>
          <ChildWindow>
            <ChildTitle>
              <Skyline size={16} />
              <ChildName>Elevation View - 2</ChildName>
              <ChildButtons>
                <ChildButton aria-label="Minimize view"><MinGlyph /></ChildButton>
                <ChildButton aria-label="Maximize view"><MaxGlyph /></ChildButton>
                <ChildButton $close aria-label="Close view"><CloseGlyph /></ChildButton>
              </ChildButtons>
            </ChildTitle>
            <Canvas><Elevation /></Canvas>
          </ChildWindow>
        </Mdi>
      </Work>
      <StatusBar>
        <StatusText $grow>Elevation View - 2</StatusText>
        <StatusText>X25.55&nbsp; Y4.00&nbsp; Z20.74</StatusText>
        <PickField label="Drawing mode" w={93} options={["Inactive"]} />
        <PickField label="Coordinate system" w={74} options={["GLOBAL"]} />
        <PickField label="Units" w={64} options={["Kgf-m"]} />
      </StatusBar>
      <TaskBar>
        <Start aria-label="Start">
          <svg width="39" height="39" viewBox="0 0 39 39" aria-hidden="true">
            <defs>
              <radialGradient id="orb" cx="50%" cy="85%" r="75%">
                <stop offset="0" stopColor="#58d4f4" /><stop offset=".45" stopColor="#1c6fae" /><stop offset="1" stopColor="#4a6a92" />
              </radialGradient>
            </defs>
            <circle cx="19.500" cy="19" r="18.500" fill="url(#orb)" stroke="#7e9cc0" />
            <path d="M3 17a17 16 0 0 1 33 0c-10 4-22-3-33 0z" fill="#c8d8ea" opacity=".4" />
            <path d="M11 11c3-2 6-2 8 0l-2 7c-2-2-5-2-8 0z" fill="#f06a28" />
            <path d="M20 12c3 2 6 1 9 0l-2 7c-3 1-6 2-9 0z" fill="#8cc83c" />
            <path d="M9 20c3-2 6-2 8 0l-2 7c-2-2-5-2-8 0z" fill="#4ca4e8" />
            <path d="M18 21c3 2 6 1 9 0l-2 7c-3 1-6 2-9 0z" fill="#fcc820" />
          </svg>
        </Start>
        <Apps>
          {APPS.map((a) => (
            <AppButton key={a.name} $open={a.open} $tone={a.tone} aria-label={a.name}>{a.art}</AppButton>
          ))}
        </Apps>
        <Tray>
          <Lang>EN</Lang>
          {TRAY.map((t) => (
            <TrayButton key={t.name} $w={t.w} aria-label={t.name}>{t.art}</TrayButton>
          ))}
          <Clock>
            <span>11:58 ب.ظ</span>
            <ClockDate>٢٠٢٢/٢٣/١٠</ClockDate>
          </Clock>
        </Tray>
        <Desktop aria-label="Show desktop" />
      </TaskBar>
    </Shell>
  );
}
